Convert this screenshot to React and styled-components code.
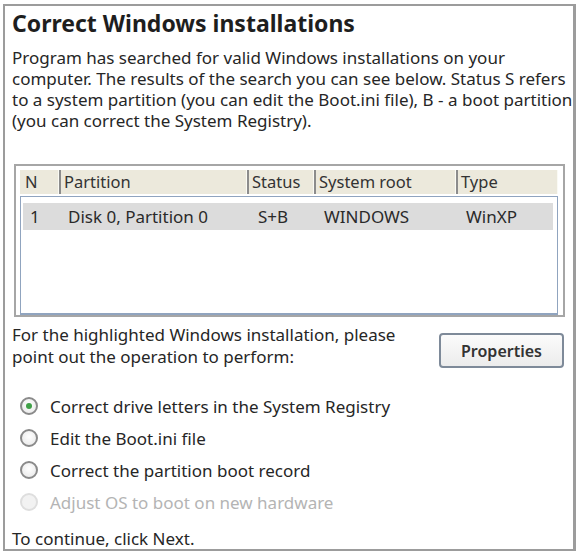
import React from 'react';
import styled, { createGlobalStyle } from 'styled-components';

const GlobalStyle = createGlobalStyle`
  html, body { margin: 0; padding: 0; background: #fff; }
  body { font-family: "Noto Sans", "DejaVu Sans", sans-serif; color: #262626; }
`
const Page = styled.div`
  width: 578px;
  height: 553px;
  box-sizing: border-box;
  padding: 4px 2px 2px 3px;
`
const Frame = styled.div`
  height: 100%;
  box-sizing: border-box;
  border: 2px solid #9c9c9c;
  border-right-width: 3px;
  overflow: hidden;
  padding: 3px 0 0 7px;
  display: flex;
  flex-direction: column;
`
const Title = styled.h1`
  margin: 0;
  font-size: 23px;
  line-height: 28px;
  font-weight: 700;
  color: #1e1e1e;
`
const Para = styled.p`
  margin: 10px 0 0;
  font-size: 17px;
  line-height: 21px;
  white-space: nowrap;
`
const TableBox = styled.div`
  margin: 33px 8px 0 2px;
  border: 2px solid #a6a6a6;
  padding: 4px 5px 0 4px;
  height: 153px;
  box-sizing: border-box;
  background: #fff;
  flex-shrink: 0;
`
const Grid = styled.div`
  display: grid;
  grid-template-columns: 39px 188px 67px 142px 1fr;
`
const HeadCell = styled.div`
  height: 24px;
  line-height: 24px;
  background: #ece9dc;
  border-left: 2px solid ${p => (p.first ? '#ece9dc' : '#8c8c8c')};
  border-right: 1px solid #fafaf4;
  padding-left: 3px;
  font-size: 16.5px;
  color: #333;
  white-space: nowrap;
  overflow: hidden;
`
const ListBox = styled.div`
  margin-top: 2px;
  height: 119px;
  box-sizing: border-box;
  border: 1px solid #90a4bf;
  border-bottom-width: 2px;
  padding: 6px 4px 0 2px;
`
const Row = styled(Grid)`
  height: 27px;
  line-height: 27px;
  background: ${p => (p.selected ? '#dcdcdc' : 'transparent')};
  font-size: 17px;
  color: #2a2a2a;
`
const Cell = styled.div`
  padding-left: ${p => p.indent}px;
  white-space: nowrap;
`
const Bottom = styled.div`
  display: flex;
  align-items: flex-start;
  margin: 7px 9px 0 0;
  flex-shrink: 0;
`
const Hint = styled.p`
  flex: 1;
  margin: 0;
  font-size: 17px;
  line-height: 22px;
  white-space: nowrap;
`
const Button = styled.button`
  margin-top: 9px;
  width: 125px;
  height: 35px;
  border: 2px solid #7e8a99;
  border-radius: 4px;
  background: linear-gradient(#fbfbfb, #ececec);
  font-family: inherit;
  font-size: 16px;
  font-weight: 600;
  color: #333;
`
const Options = styled.div`
  display: flex;
  flex-direction: column;
  gap: 10px;
  margin: 27px 0 0 8px;
`
const Option = styled.label`
  display: flex;
  align-items: center;
  gap: 12px;
  height: 22px;
  font-size: 17px;
  white-space: nowrap;
  color: ${p => (p.disabled ? '#b4b4b4' : '#262626')};
`
const Radio = styled.span`
  width: 14px;
  height: 14px;
  border-radius: 50%;
  border: 2px solid ${p => (p.disabled ? '#dedede' : '#8a8a8a')};
  background: ${p => (p.disabled ? '#f2f2f2' : 'radial-gradient(circle at 50% 40%, #fff, #e6e6e6)')};
  display: flex;
  align-items: center;
  justify-content: center;
  flex-shrink: 0;
  &::after {
    content: '';
    width: 6px;
    height: 6px;
    border-radius: 50%;
    background: ${p => (p.checked ? '#3fa047' : 'transparent')};
  }
`
const Footer = styled.p`
  margin: 15px 0 0;
  font-size: 17px;
  line-height: 22px;
  white-space: nowrap;
`

const columns = ['N', 'Partition', 'Status', 'System root', 'Type'];
const rows = [['1', 'Disk 0, Partition 0', 'S+B', 'WINDOWS', 'WinXP']];
const indents = [7, 6, 8, 7, 7];
const options = [
  { label: 'Correct drive letters in the System Registry', checked: true },
  { label: 'Edit the Boot.ini file' },
  { label: 'Correct the partition boot record' },
  { label: 'Adjust OS to boot on new hardware', disabled: true },
];

export default function App() {
  return (
    <Page>
      <GlobalStyle />
      <Frame>
        <Title>Correct Windows installations</Title>
        <Para>
          Program has searched for valid Windows installations on your<br />
          computer. The results of the search you can see below. Status S refers<br />
          to a system partition (you can edit the Boot.ini file), B - a boot partition<br />
          (you can correct the System Registry).
        </Para>
        <TableBox>
          <Grid>
            {columns.map((c, i) => (
              <HeadCell key={c} first={i === 0}>{c}</HeadCell>
            ))}
          </Grid>
          <ListBox>
            {rows.map((r, i) => (
              <Row key={i} selected>
                {r.map((v, j) => (
                  <Cell key={j} indent={indents[j]}>{v}</Cell>
                ))}
              </Row>
            ))}
          </ListBox>
        </TableBox>
        <Bottom>
          <Hint>
            For the highlighted Windows installation, please<br />
            point out the operation to perform:
          </Hint>
          <Button>Properties</Button>
        </Bottom>
        <Options>
          {options.map(o => (
            <Option key={o.label} disabled={o.disabled}>
              <Radio checked={o.checked} disabled={o.disabled} />
              {o.label}
            </Option>
          ))}
        </Options>
        <Footer>To continue, click Next.</Footer>
      </Frame>
    </Page>
  );
}
